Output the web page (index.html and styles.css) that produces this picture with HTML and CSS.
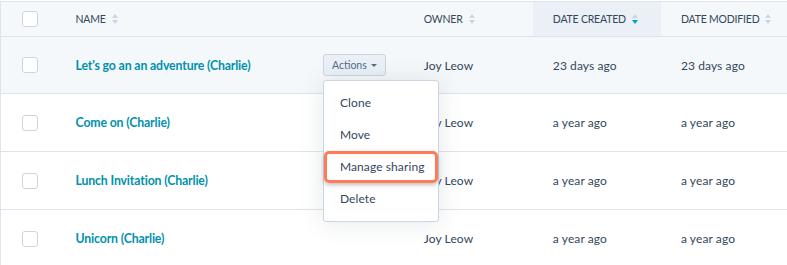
FILE: index.html
```html
<!DOCTYPE html>
<html lang="en">
<head>
    <meta charset="UTF-8">
    <meta name="viewport" content="width=device-width, initial-scale=1.0">
    <title>Templates</title>
    <link rel="stylesheet" href="styles.css">
</head>
<body>
    <table class="list">
        <colgroup>
            <col class="col-check">
            <col class="col-name">
            <col class="col-owner">
            <col class="col-created">
            <col class="col-modified">
        </colgroup>
        <thead>
            <tr>
                <th><span class="checkbox"></span></th>
                <th><span class="head">NAME <span class="sort"><i class="up"></i><i class="down"></i></span></span></th>
                <th><span class="head">OWNER <span class="sort"><i class="up"></i><i class="down"></i></span></span></th>
                <th class="sorted"><span class="head">DATE CREATED <span class="sort"><i class="up"></i><i class="down active"></i></span></span></th>
                <th><span class="head">DATE MODIFIED <span class="sort"><i class="up"></i><i class="down"></i></span></span></th>
            </tr>
        </thead>
        <tbody>
            <tr class="hover">
                <td><span class="checkbox"></span></td>
                <td>
                    <div class="name-cell">
                        <a class="name">Let's go an an adventure (Charlie)</a>
                        <div class="actions">
                            <button class="actions-btn">Actions <span class="caret"></span></button>
                            <ul class="menu">
                                <li>Clone</li>
                                <li>Move</li>
                                <li class="callout">Manage sharing</li>
                                <li>Delete</li>
                            </ul>
                        </div>
                    </div>
                </td>
                <td>Joy Leow</td>
                <td>23 days ago</td>
                <td>23 days ago</td>
            </tr>
            <tr>
                <td><span class="checkbox"></span></td>
                <td><div class="name-cell"><a class="name">Come on (Charlie)</a></div></td>
                <td>Joy Leow</td>
                <td>a year ago</td>
                <td>a year ago</td>
            </tr>
            <tr>
                <td><span class="checkbox"></span></td>
                <td><div class="name-cell"><a class="name">Lunch Invitation (Charlie)</a></div></td>
                <td>Joy Leow</td>
                <td>a year ago</td>
                <td>a year ago</td>
            </tr>
            <tr>
                <td><span class="checkbox"></span></td>
                <td><div class="name-cell"><a class="name">Unicorn (Charlie)</a></div></td>
                <td>Joy Leow</td>
                <td>a year ago</td>
                <td>a year ago</td>
            </tr>
        </tbody>
    </table>
</body>
</html>
```

FILE: styles.css
```css
body {
    margin: 0;
    padding-top: 1px;
    font-family: 'Lato', 'Noto Sans', sans-serif;
    color: #33475b;
    background: #fff;
    overflow: hidden;
}
.list {
    width: 787px;
    table-layout: fixed;
    border-collapse: collapse;
    border-top: 1px solid #dfe3eb;
    border-left: 1px solid #dfe3eb;
}
.col-check { width: 55px; }
.col-name { width: 348px; }
.col-owner { width: 129px; }
.col-created { width: 128px; }
.col-modified { width: 126px; }
th, td {
    text-align: left;
    padding: 0 0 0 20px;
    vertical-align: middle;
    border-bottom: 1px solid #dfe3eb;
    font-size: 12px;
    letter-spacing: 0.1px;
}
th:first-child, td:first-child {
    padding-left: 21px;
}
thead th {
    height: 34px;
    background: #f5f8fa;
    font-size: 10.5px;
    font-weight: 400;
    letter-spacing: -0.2px;
}
thead th.sorted {
    background: #eaf0f6;
}
tbody td {
    height: 57px;
}
tbody tr.hover td {
    background: #f5f8fa;
    height: 56px;
}
.checkbox {
    display: block;
    width: 14px;
    height: 14px;
    border: 1px solid #cbd6e2;
    border-radius: 3px;
    background: #fff;
}
.head {
    display: inline-flex;
    align-items: center;
}
.sort {
    display: inline-flex;
    flex-direction: column;
    gap: 2px;
    margin-left: 6px;
}
.sort i {
    width: 0;
    height: 0;
    border-left: 3.5px solid transparent;
    border-right: 3.5px solid transparent;
}
.sort .up {
    border-bottom: 4px solid #cbd6e2;
}
.sort .down {
    border-top: 4px solid #cbd6e2;
}
.sort .down.active {
    border-top-color: #00a4bd;
}
.name-cell {
    display: flex;
    align-items: center;
    justify-content: space-between;
    padding-right: 18px;
}
.name {
    color: #0091ae;
    font-weight: 700;
    font-size: 12.3px;
    letter-spacing: -0.15px;
}
.actions {
    position: relative;
}
.actions-btn {
    display: flex;
    align-items: center;
    gap: 4px;
    height: 22px;
    padding: 0 8px;
    background: #eaf0f6;
    border: 1px solid #cbd6e2;
    border-radius: 3px;
    font-family: inherit;
    font-size: 10.5px;
    color: #506e91;
}
.caret {
    width: 0;
    height: 0;
    border-left: 3px solid transparent;
    border-right: 3px solid transparent;
    border-top: 3px solid #506e91;
}
.menu {
    position: absolute;
    top: 26px;
    left: 0;
    width: 114px;
    margin: 0;
    padding: 6px 0;
    list-style: none;
    background: #fff;
    border: 1px solid #cbd6e2;
    border-radius: 3px;
    box-shadow: 0 1px 24px rgba(45, 62, 80, 0.12);
    z-index: 2;
}
.menu li {
    position: relative;
    height: 32px;
    line-height: 32px;
    padding-left: 16px;
    font-size: 12px;
    letter-spacing: 0.1px;
    color: #33475b;
}
.callout::after {
    content: "";
    position: absolute;
    top: 0;
    left: 0;
    right: 0;
    bottom: 0;
    border: 3px solid #ff7a59;
    border-radius: 5px;
    box-shadow: 0 2px 4px rgba(0, 0, 0, 0.25);
}
```
